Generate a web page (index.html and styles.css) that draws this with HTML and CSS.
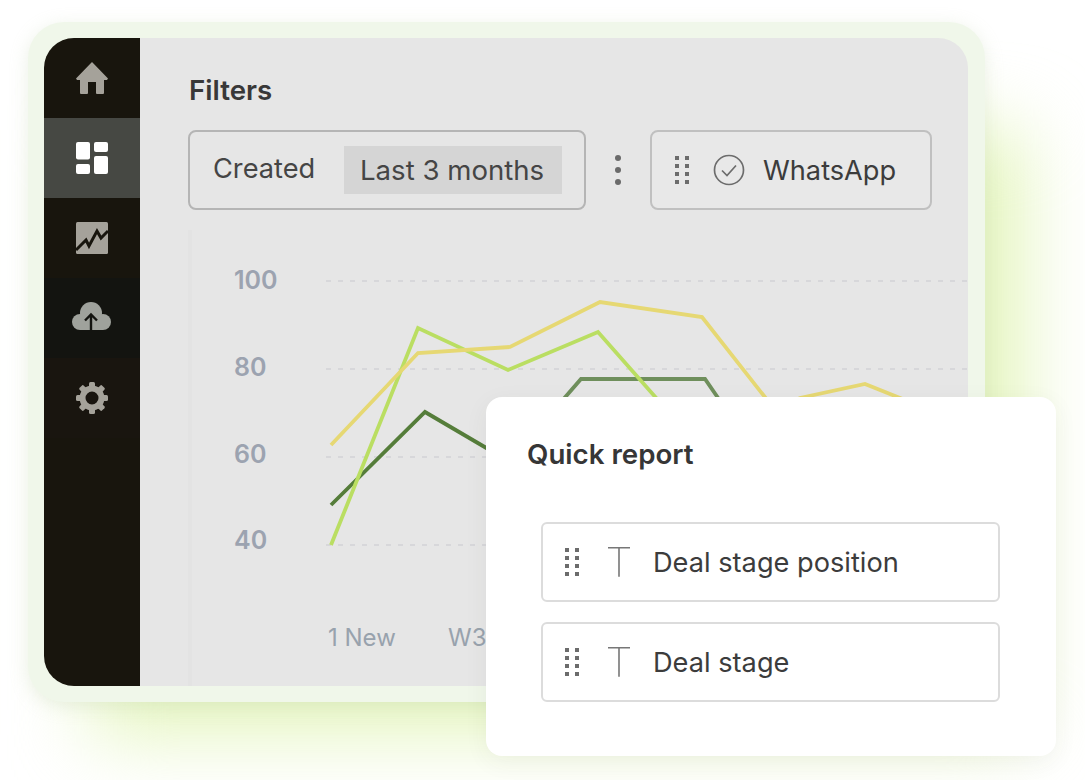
FILE: index.html
```html
<!doctype html>
<html>
  <head>
    <title>Quick report</title>
    <meta http-equiv="Content-Type" content="text/html; charset=utf-8" />
    <link rel="stylesheet" href="styles.css">
  </head>
  <body>
    <svg class="defs" width="0" height="0">
      <symbol id="grip" viewBox="0 0 14 28">
        <rect x="0" y="0" width="4" height="4" /><rect x="10" y="0" width="4" height="4" />
        <rect x="0" y="8" width="4" height="4" /><rect x="10" y="8" width="4" height="4" />
        <rect x="0" y="16" width="4" height="4" /><rect x="10" y="16" width="4" height="4" />
        <rect x="0" y="24" width="4" height="4" /><rect x="10" y="24" width="4" height="4" />
      </symbol>
      <symbol id="text-field" viewBox="0 0 22 30">
        <path d="M0 .8h22M11 .8v29" fill="none" stroke="#777" stroke-width="1.6" />
      </symbol>
    </svg>

    <div class="glow"></div>

    <div class="frame">
      <div class="shell">
        <nav class="sidebar">
          <a class="nav-item">
            <svg class="icon" viewBox="0 0 32 32">
              <path fill-rule="evenodd" d="M16 0 32 16.5 31 18H28V31a1 1 0 0 1-1 1H21a1 1 0 0 1-1-1V20H12V31a1 1 0 0 1-1 1H5a1 1 0 0 1-1-1V18H1L0 16.5Z" />
            </svg>
          </a>
          <a class="nav-item active">
            <svg class="icon" viewBox="0 0 32 32">
              <rect x="0" y="0" width="14" height="17.5" rx="2" />
              <rect x="18" y="0" width="14" height="10" rx="2" />
              <rect x="0" y="22" width="14" height="10" rx="2" />
              <rect x="18" y="14" width="14" height="18" rx="2" />
            </svg>
          </a>
          <a class="nav-item">
            <svg class="icon" viewBox="0 0 32 32">
              <rect x="0" y="0" width="32" height="32" rx="1.5" />
              <path d="M0 28 10 18 13 24 21 9 25 16 32 9" fill="none" stroke="#18150d" stroke-width="3" />
            </svg>
          </a>
          <a class="nav-item upload">
            <svg class="icon cloud" viewBox="0 0 39 28">
              <circle cx="19" cy="11" r="11" />
              <circle cx="8" cy="20" r="8" />
              <circle cx="31" cy="20" r="8" />
              <rect x="8" y="14" width="23" height="14" />
              <path d="M19 28V13M13 18.5 19 12.5 25 18.5" fill="none" stroke="#131410" stroke-width="2.4" />
            </svg>
          </a>
          <a class="nav-item settings">
            <svg class="icon" viewBox="0 0 32 32">
              <circle cx="16" cy="16" r="9.5" fill="none" stroke="#a5a29a" stroke-width="6" />
              <rect x="13" y="0" width="6" height="6" rx="1.5" />
              <rect x="13" y="0" width="6" height="6" rx="1.5" transform="rotate(45 16 16)" />
              <rect x="13" y="0" width="6" height="6" rx="1.5" transform="rotate(90 16 16)" />
              <rect x="13" y="0" width="6" height="6" rx="1.5" transform="rotate(135 16 16)" />
              <rect x="13" y="0" width="6" height="6" rx="1.5" transform="rotate(180 16 16)" />
              <rect x="13" y="0" width="6" height="6" rx="1.5" transform="rotate(225 16 16)" />
              <rect x="13" y="0" width="6" height="6" rx="1.5" transform="rotate(270 16 16)" />
              <rect x="13" y="0" width="6" height="6" rx="1.5" transform="rotate(315 16 16)" />
            </svg>
          </a>
        </nav>

        <main class="panel">
          <h2 class="title">Filters</h2>
          <div class="filters">
            <div class="filter-box date">
              <span class="filter-label">Created</span>
              <span class="chip">Last 3 months</span>
            </div>
            <div class="more"><i></i><i></i><i></i></div>
            <div class="filter-box channel">
              <svg class="grip"><use href="#grip" /></svg>
              <svg class="check" viewBox="0 0 32 32">
                <circle cx="16" cy="16" r="14.5" fill="none" stroke="#6c6c6c" stroke-width="1.7" />
                <path d="M9 16.5 14 21.5 23 11.5" fill="none" stroke="#6c6c6c" stroke-width="1.7" />
              </svg>
              <span class="channel-name">WhatsApp</span>
            </div>
          </div>

          <div class="chart">
            <svg viewBox="188 230 780 456" width="780" height="456">
              <g class="grid">
                <path d="M326 281H968" />
                <path d="M326 369H968" />
                <path d="M326 457H968" />
                <path d="M326 545H968" />
              </g>
              <g class="y-axis">
                <text x="234" y="289">100</text>
                <text x="234" y="376">80</text>
                <text x="234" y="463">60</text>
                <text x="234" y="549">40</text>
              </g>
              <g class="x-axis">
                <text x="328" y="646">1 New</text>
                <text x="448" y="646">W3</text>
              </g>
              <polyline class="line dark" points="331,505 425,412 500,456" />
              <polyline class="line dark faded" points="515,455 581,379 705,379 740,430" />
              <polyline class="line lime" points="331,545 418,328 508,370 598,332 680,425" />
              <polyline class="line sand" points="331,445 418,353 510,347 600,302 702,317 775,410 800,398 865,384 930,410" />
            </svg>
          </div>
        </main>
      </div>
    </div>

    <section class="report">
      <h3 class="report-title">Quick report</h3>
      <div class="report-rows">
        <div class="report-row">
          <svg class="grip"><use href="#grip" /></svg>
          <svg class="t-icon"><use href="#text-field" /></svg>
          <span>Deal stage position</span>
        </div>
        <div class="report-row">
          <svg class="grip"><use href="#grip" /></svg>
          <svg class="t-icon"><use href="#text-field" /></svg>
          <span>Deal stage</span>
        </div>
      </div>
    </section>
  </body>
</html>
```

FILE: styles.css
```css
* {
  margin: 0;
  padding: 0;
  box-sizing: border-box;
}
html,
body {
  height: 780px;
  overflow: hidden;
}
body {
  position: relative;
  background-color: #ffffff;
  padding: 22px 0 0 28px;
  font-family: Inter, "Noto Sans", sans-serif;
  color: #3a3a3a;
}
.defs {
  position: absolute;
}
.glow {
  position: absolute;
  left: 90px;
  top: 130px;
  width: 935px;
  height: 605px;
  background-color: #e4f5bd;
  filter: blur(38px);
}
.frame {
  position: relative;
  width: 957px;
  height: 680px;
  padding: 16px 17px 16px 16px;
  background-color: #f0f7ea;
  border-radius: 36px;
  box-shadow: 0 4px 18px rgba(190, 205, 170, 0.3);
}
.shell {
  display: flex;
  height: 648px;
  border-radius: 30px;
  overflow: hidden;
}

/* left nav */
.sidebar {
  width: 96px;
  flex: none;
  background-color: #18150d;
}
.nav-item {
  display: flex;
  align-items: center;
  justify-content: center;
  height: 80px;
}
.nav-item.active {
  background-color: #464843;
}
.nav-item.upload {
  background-color: #131410;
}
.nav-item.settings {
  background-color: #19150f;
}
.icon {
  display: block;
  width: 32px;
  height: 32px;
  fill: #a5a29a;
}
.active .icon {
  fill: #ffffff;
}
.icon.cloud {
  width: 39px;
  height: 28px;
  fill: #9fa29c;
  margin-left: -1px;
  margin-top: -4px;
}

/* main panel */
.panel {
  flex: 1;
  display: flex;
  flex-direction: column;
  background-color: #e6e6e6;
  padding: 36px 0 0 48px;
  min-width: 0;
}
.title {
  font-size: 27.7px;
  line-height: 32px;
  font-weight: 600;
  color: #383838;
  margin-left: 1px;
  margin-bottom: 24px;
}
.filters {
  display: flex;
  height: 80px;
}
.filter-box {
  display: flex;
  align-items: center;
  border: 2px solid #b5b5b5;
  border-radius: 8px;
  font-size: 27.2px;
  color: #454545;
}
.filter-box.date {
  width: 398px;
  padding-left: 23px;
}
.filter-label {
  width: 131px;
  margin-bottom: 3px;
}
.chip {
  display: block;
  width: 218px;
  height: 48px;
  line-height: 48px;
  padding-left: 16px;
  font-size: 27.6px;
  background-color: #d5d5d5;
}
.more {
  display: flex;
  flex-direction: column;
  align-items: center;
  justify-content: center;
  gap: 6px;
  width: 64px;
}
.more i {
  display: block;
  width: 6px;
  height: 6px;
  border-radius: 50%;
  background-color: #6a6a6a;
}
.filter-box.channel {
  width: 282px;
  padding-left: 23px;
  border-color: #c0c0c0;
  background-color: #e8e8e8;
}
.grip {
  display: block;
  flex: none;
  width: 14px;
  height: 28px;
  fill: #6c6c6c;
}
.check {
  flex: none;
  width: 32px;
  height: 32px;
  margin-left: 24px;
}
.channel-name {
  margin-left: 18px;
  color: #3c3c3c;
}

/* chart */
.chart {
  flex: 1;
  margin-top: 20px;
  border-left: 4px solid #e3e3e3;
}
.chart svg {
  display: block;
  margin-left: -4px;
}
.grid path {
  stroke: #d2d2d6;
  stroke-width: 1.6;
  stroke-dasharray: 5 7;
  fill: none;
}
.y-axis text {
  font-size: 25px;
  font-weight: 600;
  fill: #9ca3b0;
}
.x-axis text {
  font-size: 24px;
  fill: #98a2ad;
}
.line {
  fill: none;
  stroke-width: 3.8;
}
.line.dark {
  stroke: #557d3a;
}
.line.faded {
  stroke: #6f8f5c;
}
.line.lime {
  stroke: #bade62;
}
.line.sand {
  stroke: #e6d873;
}

/* floating card */
.report {
  position: absolute;
  left: 486px;
  top: 397px;
  width: 570px;
  height: 359px;
  padding: 41px 56px 0 41px;
  background-color: #ffffff;
  border-radius: 16px;
  box-shadow: 0 6px 24px rgba(60, 70, 50, 0.06);
}
.report-title {
  font-size: 27.7px;
  line-height: 32px;
  font-weight: 600;
  color: #363636;
  margin-bottom: 52px;
}
.report-rows {
  display: flex;
  flex-direction: column;
  gap: 20px;
  padding-left: 14px;
}
.report-row {
  display: flex;
  align-items: center;
  width: 459px;
  height: 80px;
  padding-left: 22px;
  border: 2px solid #dcdcdc;
  border-radius: 6px;
  font-size: 27.2px;
  color: #3c3c3c;
}
.t-icon {
  flex: none;
  width: 22px;
  height: 30px;
  margin-left: 29px;
  margin-right: 23px;
}
```
